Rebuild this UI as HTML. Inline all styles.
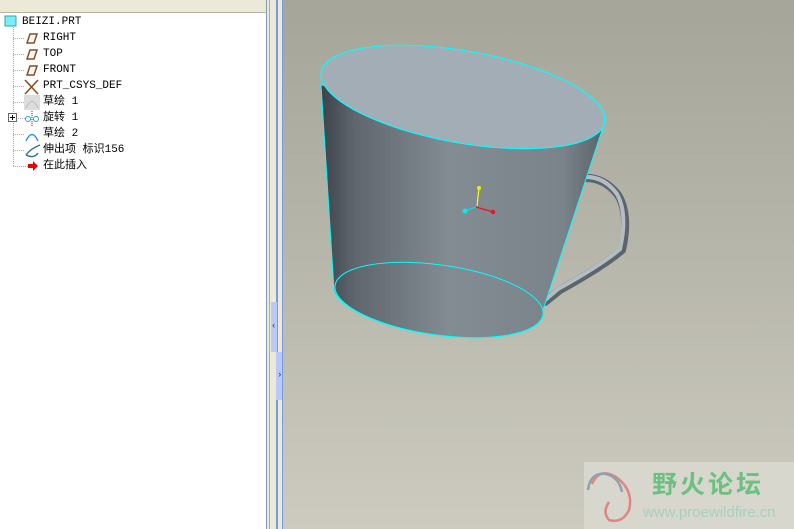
<!DOCTYPE html>
<html><head><meta charset="utf-8"><style>
body{margin:0;width:794px;height:529px;overflow:hidden;position:relative;background:#fff;font-family:"Liberation Mono","Noto Sans CJK SC",monospace;}
.hdr{position:absolute;left:0;top:0;width:266px;height:12px;background:#ece9d8;border-bottom:1px solid #b8b4a0;}
.tree{position:absolute;left:0;top:13px;width:266px;height:516px;background:#fff;}
.row{position:absolute;left:43px;font-size:11px;line-height:12px;color:#000;white-space:nowrap;font-family:"Liberation Mono","Noto Sans CJK SC",monospace;}
.vp{position:absolute;left:283px;top:0;width:511px;height:529px;background:linear-gradient(#a6a599,#b4b3a7 40%,#cdcbbf);}
</style></head><body>
<div class="hdr"></div>
<div class="tree">
<svg width="266" height="170" style="position:absolute;left:0;top:0">
<line x1="13.5" y1="14" x2="13.5" y2="153" stroke="#aaa" stroke-dasharray="1,1"/>
<g stroke="#aaa" stroke-dasharray="1,1">
<line x1="13" y1="25.5" x2="25" y2="25.5"/><line x1="13" y1="41.5" x2="25" y2="41.5"/><line x1="13" y1="57.5" x2="25" y2="57.5"/><line x1="13" y1="73.5" x2="25" y2="73.5"/><line x1="13" y1="89.5" x2="25" y2="89.5"/><line x1="18" y1="105.5" x2="25" y2="105.5"/><line x1="13" y1="121.5" x2="25" y2="121.5"/><line x1="13" y1="137.5" x2="25" y2="137.5"/><line x1="13" y1="153.5" x2="28" y2="153.5"/></g>
<rect x="5" y="3" width="11" height="10" fill="#7ef" stroke="#3a8" />
<g fill="none" stroke="#8b4a1c" stroke-width="1.5"><path d="M27 30 L30 21 L37 21 L34 30Z"/><path d="M27 46 L30 37 L37 37 L34 46Z"/><path d="M27 62 L30 53 L37 53 L34 62Z"/><path d="M25 67 L38 81 M38 67 L25 81"/></g>
<rect x="24" y="82" width="16" height="15" fill="#ddd"/><path d="M26 95 Q32 82 38 95" stroke="#bbb" fill="none"/>
<rect x="8.5" y="100.5" width="8" height="8" fill="#fff" stroke="#666"/><path d="M10 104.5h5M12.5 102v5" stroke="#000"/>
<circle cx="28" cy="106" r="2.5" fill="none" stroke="#39c"/><circle cx="36" cy="106" r="2.5" fill="none" stroke="#39c"/><line x1="32" y1="98" x2="32" y2="113" stroke="#333" stroke-dasharray="1,1"/>
<path d="M26 128 Q32 115 38 128" stroke="#18f" fill="none" stroke-width="1.3"/>
<path d="M26 142 Q30 136 40 132 M26 142 Q34 146 38 140" stroke="#2a7080" fill="none" stroke-width="1.3"/>
<path d="M28 151h5v-3l5 5-5 5v-3h-5z" fill="#e00"/>
</svg>
<div class="row" style="left:22px;top:3px">BEIZI.PRT</div>
<div class="row" style="top:19px">RIGHT</div>
<div class="row" style="top:35px">TOP</div>
<div class="row" style="top:51px">FRONT</div>
<div class="row" style="top:67px">PRT_CSYS_DEF</div>
<div class="row" style="top:83px">草绘 1</div>
<div class="row" style="top:99px">旋转 1</div>
<div class="row" style="top:115px">草绘 2</div>
<div class="row" style="top:131px">伸出项 标识156</div>
<div class="row" style="top:147px">在此插入</div>
</div>
<div style="position:absolute;left:266px;top:0;width:17px;height:529px;background:#ece9d8">
<div style="position:absolute;left:0;top:0;width:1px;height:529px;background:#7f9db9"></div>
<div style="position:absolute;left:3px;top:0;width:1px;height:529px;background:#aab"></div>
<div style="position:absolute;left:10px;top:0;width:2px;height:529px;background:#7b9be0"></div>
<div style="position:absolute;left:16px;top:0;width:1px;height:529px;background:#7b9be0"></div>
<div style="position:absolute;left:5px;top:302px;width:6px;height:50px;background:#b8caf5"></div>
<div style="position:absolute;left:10px;top:352px;width:6px;height:48px;background:#b8caf5"></div>
<div style="position:absolute;left:5px;top:321px;font-size:9px;color:#335">‹</div>
<div style="position:absolute;left:11px;top:370px;font-size:9px;color:#335">›</div>
</div>
<div class="vp"></div>
<svg width="794" height="529" style="position:absolute;left:0;top:0">
<defs>
<linearGradient id="bd" gradientUnits="userSpaceOnUse" x1="321" x2="606" y1="0" y2="0"><stop offset="0" stop-color="#3e434a"/><stop offset=".12" stop-color="#5f666e"/><stop offset=".45" stop-color="#838b93"/><stop offset=".85" stop-color="#7a828a"/><stop offset="1" stop-color="#5a6168"/></linearGradient>
</defs>
<path d="M573 180 Q600 172 618 195 Q630 215 622 250 Q605 265 560 290 L545 302" stroke="#5d656c" stroke-width="8" fill="none" stroke-linecap="round"/>
<path d="M573 179 Q600 171 617 194 Q628 214 620 249 Q603 264 558 289 L544 301" stroke="#b4bdc4" stroke-width="4" fill="none"/>
<path d="M321 85 L334 290 A105 35 8 0 0 543 310 L606 118 Z" fill="url(#bd)" stroke="#0ff" stroke-width="1"/>
<ellipse cx="439" cy="300" rx="105" ry="35" transform="rotate(8 439 300)" fill="none" stroke="#0ff" stroke-width="1"/>
<ellipse cx="463" cy="97" rx="144" ry="46" transform="rotate(10 463 97)" fill="#a2adb5" stroke="#0ff" stroke-width="1.2"/>
<line x1="479" y1="188" x2="477" y2="206" stroke="#ff0" stroke-width="1.2"/><circle cx="479" cy="188" r="2" fill="#ee0"/>
<line x1="476" y1="207" x2="493" y2="212" stroke="#e12" stroke-width="1.2"/><circle cx="493" cy="212" r="2.2" fill="#e12"/>
<line x1="476" y1="207" x2="465" y2="211" stroke="#0dd" stroke-width="1.2"/><circle cx="465" cy="211" r="2.5" fill="#0ee"/>
</svg>
<div style="position:absolute;left:584px;top:462px;width:210px;height:67px;background:#d9d8cf;opacity:.9"></div>
<svg width="70" height="67" style="position:absolute;left:584px;top:462px">
<path d="M8 22 Q15 5 32 15 Q50 28 45 48 Q38 62 25 58 Q18 50 25 40" stroke="#e08585" stroke-width="2.5" fill="none"/>
<path d="M4 28 Q6 10 22 12 Q35 15 38 30" stroke="#8ea2b2" stroke-width="2.5" fill="none"/>
</svg>
<div style="position:absolute;left:652px;top:467px;font-size:25px;font-weight:bold;color:#6cc080;font-family:'Noto Sans CJK SC',sans-serif;letter-spacing:3px;line-height:32px">野火论坛</div>
<div style="position:absolute;left:643px;top:504px;font-size:15px;color:#a6cfc0;font-family:'Liberation Sans',sans-serif;line-height:18px">www.proewildfire.cn</div>
</body></html>
